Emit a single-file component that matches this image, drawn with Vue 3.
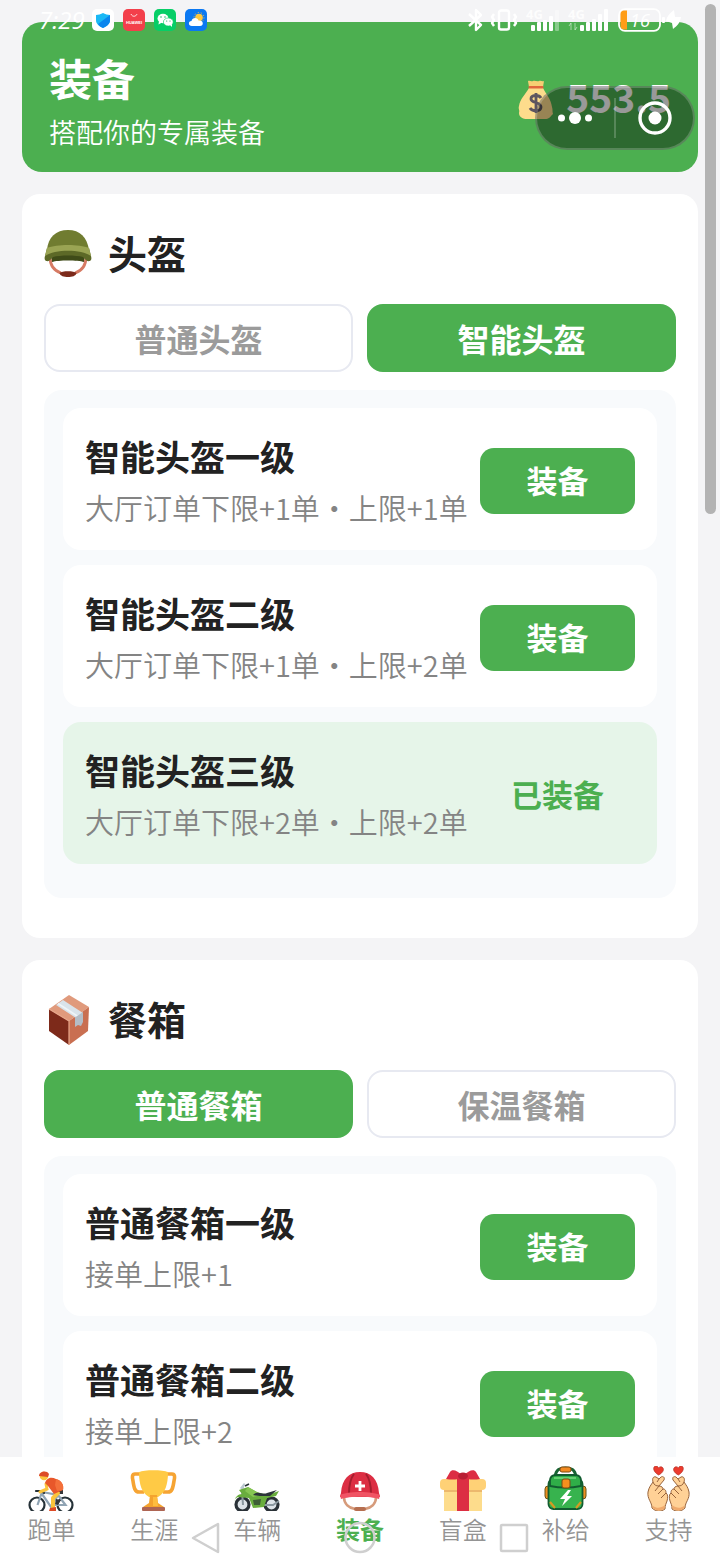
<script setup>
import { ref } from 'vue'

const sections = ref([
  {
    id: 'helmet',
    title: '头盔',
    tabs: ['普通头盔', '智能头盔'],
    active: 1,
    items: [
      { name: '智能头盔一级', desc: '大厅订单下限+1单・上限+1单', on: false },
      { name: '智能头盔二级', desc: '大厅订单下限+1单・上限+2单', on: false },
      { name: '智能头盔三级', desc: '大厅订单下限+2单・上限+2单', on: true }
    ]
  },
  {
    id: 'box',
    title: '餐箱',
    tabs: ['普通餐箱', '保温餐箱'],
    active: 0,
    items: [
      { name: '普通餐箱一级', desc: '接单上限+1', on: false },
      { name: '普通餐箱二级', desc: '接单上限+2', on: false }
    ]
  }
])

const nav = [
  { id: 'run', label: '跑单' },
  { id: 'career', label: '生涯' },
  { id: 'bike', label: '车辆' },
  { id: 'gear', label: '装备' },
  { id: 'gift', label: '盲盒' },
  { id: 'supply', label: '补给' },
  { id: 'support', label: '支持' }
]
const current = ref('gear')

function equip(section, item) {
  section.items.forEach((i) => { i.on = i === item })
}
</script>

<template>
  <div class="screen">
    <main class="page">
      <header class="hero">
        <div>
          <h1>装备</h1>
          <p>搭配你的专属装备</p>
        </div>
        <div class="money">
          <svg class="bag" viewBox="0 0 36 40" aria-hidden="true">
            <path d="M11 8 C7 15 2 19 1 26 C0 29 2 30 1 33 C1 37 5 39 9 39 H27 C31 39 32 37 35 34 C34 31 35 30 34 27 C33 19 28 14 25 8 Z" fill="#fddc8c" />
            <path d="M11 7 L10 1 C12 0 13 2 15 1 C17 0 19 2 21 1 C23 0 24 2 26 1 L25 7 Z" fill="#f6cf73" />
            <rect x="10.500" y="6" width="15" height="2.500" rx="1" fill="#e0663c" />
            <path d="M23 18 C21 14.500 13 14.500 13 19 C13 23.500 23 21.500 23 27 C23 32 14 31.500 12 28 M18 13 V33" fill="none" stroke="#5d5560" stroke-width="2.800" />
          </svg>
          <strong>553.5</strong>
        </div>
      </header>

      <section v-for="s in sections" :key="s.id" class="card">
        <h2>
          <svg v-if="s.id === 'helmet'" class="title-icon" viewBox="0 -1 48 50" aria-hidden="true">
            <path d="M6 27 C6 36 11 41 17 43 M42 27 C42 36 37 41 31 43" fill="none" stroke="#d67a63" stroke-width="2.800" />
            <path d="M15.500 43 C18 40.500 30 40.500 32.500 43 C32 46 28 47 24 47 C20 47 16 46 15.500 43 Z" fill="#7c2a1b" />
            <path d="M7 22 H41 L40 32 C34 30 14 30 8 32 Z" fill="#3f4b18" />
            <path d="M3 20 C4 7 12 0 24 0 C36 0 43 7 45 20 L40 24 H8 Z" fill="#707c30" />
            <path d="M3 18 L1 26 C0 29 1 31 3 31 C5 32 7 29 9 27 C16 25 32 25 39 27 C41 29 43 32 45 31 C47 31 48 29 47 26 L45 18 Z" fill="#5d6927" />
            <path d="M3 18 C13 14 35 14 45 18 L47 26 C37 19 11 19 1 26 Z" fill="#9aa453" />
          </svg>
          <svg v-else class="title-icon" viewBox="-1 0 48 50" aria-hidden="true">
            <path d="M24 0 L44 12 L24 26 L4 14 Z" fill="#e09a7c" />
            <path d="M4 14 L24 26 V50 L4 36 Z" fill="#7d2a1a" />
            <path d="M24 26 L44 12 L43 36 L24 50 Z" fill="#c96f51" />
            <path d="M4 14 L24 26 V50" fill="none" stroke="#e9a88c" stroke-width="1.200" />
            <path d="M11 10 L18 5 L38 18 L31 23 Z" fill="#d9e3ea" />
            <path d="M13 8.500 L33 21.500" stroke="#eff4f7" stroke-width="1.600" />
            <path d="M30 22.500 L38 17 V27 L36 31 L33 30 L30 32 Z" fill="#b4bdc6" />
          </svg>
          <span>{{ s.title }}</span>
        </h2>

        <div class="tabs" role="tablist">
          <button
            v-for="(t, i) in s.tabs"
            :key="t"
            type="button"
            role="tab"
            class="tab"
            :class="{ active: i === s.active }"
            :aria-selected="i === s.active"
            @click="s.active = i"
          >{{ t }}</button>
        </div>

        <ul class="panel">
          <li v-for="item in s.items" :key="item.name" class="item" :class="{ on: item.on }">
            <div class="info">
              <h3>{{ item.name }}</h3>
              <p>{{ item.desc }}</p>
            </div>
            <span v-if="item.on" class="state">已装备</span>
            <button v-else type="button" class="equip" @click="equip(s, item)">装备</button>
          </li>
        </ul>
      </section>
    </main>

    <nav class="navbar">
      <a
        v-for="n in nav"
        :key="n.id"
        :href="'#' + n.id"
        :class="{ current: n.id === current }"
        @click.prevent="current = n.id"
      >
        <svg class="nav-icon" viewBox="0 0 48 45" aria-hidden="true">
          <g v-if="n.id === 'run'">
            <g fill="none" stroke="#263238" stroke-width="2.200">
              <circle cx="10" cy="39" r="7.500" /><circle cx="38" cy="39" r="7.500" />
            </g>
            <path d="M10.500 39 L15 26 L31 29 L24 41 L15 28 M31 29 L38.500 39 H24" fill="none" stroke="#90a4b4" stroke-width="2.200" />
            <path d="M9 25 H15 L17 27" fill="none" stroke="#263238" stroke-width="2.200" stroke-linecap="round" />
            <path d="M29 24 L36 23.500 L36 28 L31 28 Z M29 33 L34 34 L31 39 L28 38 Z" fill="#34373b" />
            <path d="M19 18 L20 23 L13 26" fill="none" stroke="#fbc43c" stroke-width="3" stroke-linecap="round" />
            <path d="M26 23 L31 27 L26 32 V43" fill="none" stroke="#fbc43c" stroke-width="4" stroke-linejoin="round" />
            <path d="M18 17 C20 11 25 11 29 13 C35 15 37 19 36 24 L27 28 L24 24 L21 20 Z" fill="#e8572a" />
            <path d="M29 13 C35 15 37 19 36 24 L30 25 L28 19 Z" fill="#f4703a" />
            <circle cx="17" cy="10" r="4.300" fill="#fbc43c" />
            <path d="M12 10 C12 5 20 4 22 8 L21 11 Z" fill="#dd4b26" />
            <path d="M23 42 L29 41 V45 H22 Z" fill="#dd4b26" />
          </g>
          <g v-else-if="n.id === 'career'">
            <path d="M12 8 H5 C2 8 2 11 3 15 C4 22 5 26 9 26 H14 M35 8 H42 C45 8 45 11 44 15 C43 22 42 26 38 26 H33" fill="none" stroke="#f6a433" stroke-width="3.600" />
            <path d="M9 6 C14 3.500 33 3.500 38 6 C38 19 35 27 28 31 H19 C12 27 9 19 9 6 Z" fill="#ffca45" />
            <path d="M20 29 H27 L28 37 L34 41 H13 L19 37 Z" fill="#f4a32e" />
            <path d="M23 31 H27 L28 40 H23 Z" fill="#ffbd3e" />
            <rect x="12" y="41" width="23" height="4" rx="1" fill="#ae6553" />
          </g>
          <g v-else-if="n.id === 'bike'">
            <g fill="#dde3e8" stroke="#2a3137" stroke-width="3.200">
              <circle cx="9.500" cy="38.500" r="6.500" /><circle cx="38.500" cy="38.500" r="6.500" />
            </g>
            <path d="M9 25 L10 39 M22 39 H40 L46 35" fill="none" stroke="#8b98a0" stroke-width="2" />
            <path d="M7 22 L11 17 L12 18 L10 25 Z" fill="#b9c7cf" />
            <path d="M6 24 L15 21 L24 26 L34 29 L46 25 L43 30 L34 32 L31 41 L20 42 L16 32 L5 31 C2 32 1 34 1 36 C2 31 5 28 9 28 Z" fill="#69ad3d" />
            <path d="M15 21 L12 25 L20 31 L29 29 Z" fill="#86c653" />
            <path d="M20 29 C24 24 30 29 34 27 L44 24 L37 30 L27 30 Z" fill="#2c353a" />
            <path d="M20 34 L28 33 L27 39 H21 Z" fill="#3d5e35" />
            <path d="M12 20 L16 18" stroke="#29343a" stroke-width="1.600" />
          </g>
          <g v-else-if="n.id === 'gear'">
            <path d="M8 31 C8 38 13 42 19 43 H29 C35 42 40 38 40 31" fill="none" stroke="#d69b7b" stroke-width="2.600" />
            <rect x="18" y="41" width="12" height="4" rx="2" fill="#b66f50" />
            <path d="M5 27 C6 13 13 6 24 6 C35 6 42 13 43 27 L44 31 H4 Z" fill="#dc2e43" />
            <path d="M18 8 C14 13 13 20 13 28 M30 8 C34 13 35 20 35 28" fill="none" stroke="#a41e2e" stroke-width="2" />
            <path d="M4 29 C12 25 36 25 44 29 L43 33 C34 30 14 30 5 33 Z" fill="#f05464" />
            <path d="M24 15 V25 M19 20 H29" stroke="#fff" stroke-width="2.800" />
          </g>
          <g v-else-if="n.id === 'gift'">
            <rect x="5" y="20" width="38" height="25" fill="#fddc8c" />
            <rect x="1" y="13" width="46" height="11" rx="4" fill="#ffd176" />
            <path d="M5 25 H43" stroke="#e6ad63" stroke-width="1.600" />
            <rect x="18" y="10" width="12" height="35" fill="#dc2e43" />
            <path d="M24 10 C18 4 13 3 11 6 L7 13 C13 14 19 14 24 11 C29 14 35 14 41 13 L37 6 C35 3 30 4 24 10 Z" fill="#dc2e43" />
            <ellipse cx="24" cy="10" rx="5" ry="3.500" fill="#b91f34" />
          </g>
          <g v-else-if="n.id === 'supply'">
            <path d="M13 11 C14 3 18 2 23.500 2 C29 2 33 3 34 11" fill="none" stroke="#176434" stroke-width="3" />
            <rect x="18" y="1" width="11" height="5" rx="2" fill="#f38a20" stroke="#7e4a12" />
            <rect x="3" y="20" width="7" height="13" rx="3" fill="#ee8f23" stroke="#6b5417" />
            <rect x="37" y="20" width="7" height="13" rx="3" fill="#ee8f23" stroke="#6b5417" />
            <rect x="6.500" y="13" width="34" height="30" rx="5" fill="#37b34e" stroke="#125c30" stroke-width="1.800" />
            <path d="M8 20 V15 C8 11 10 9 14 9 H33 C37 9 39 11 39 15 V20 C29 22 18 22 8 20 Z" fill="#2fae48" stroke="#125c30" stroke-width="1.800" />
            <path d="M12 12 H34" stroke="#72d77c" stroke-width="1.600" />
            <rect x="20" y="13" width="8" height="9" rx="2" fill="#f5901e" stroke="#7b4a12" />
            <path d="M8 36 L13 42 M39 36 L34 42" stroke="#d69a22" stroke-width="2.200" />
            <path d="M26 24 L18 33 H23 L20 40 L30 30 H25 L29 24 Z" fill="#fff" />
          </g>
          <g v-else>
            <g v-for="side in ['left', 'right']" :key="side" :class="side">
              <path d="M13.500 9 C7 5 8 0 11 0 C13 0 13.500 2 13.500 2 C13.500 2 15 0 17 1 C20 3 18 7 13.500 9 Z" fill="#ec3b2e" stroke="#a92a20" stroke-width=".6" />
              <path d="M7 42 C7 36 2 33 3 26 C4 21 6 19 8 16 C7 13 8 10 11 11 L14 13 L16 11 C18 10 20 11 19 14 L14 20 C17 20 18 22 18 23 C21 23 21 26 21 27 C23 28 23 32 22 35 C21 38 20 39 20 43 C16 46 11 46 7 42 Z" fill="#ffd196" stroke="#98643c" stroke-width="1" />
              <path d="M8 16 C9 19 11 20 14 20 L10 25 M18 23 L13 28 M21 27 L16 32 M14 13 L12 16" fill="none" stroke="#98643c" stroke-width="1" />
              <path d="M8 40 C12 43 16 42 20 39 L19 43 C15 45 11 45 8 42 Z" fill="#f1aa6c" />
            </g>
          </g>
        </svg>
        <span>{{ n.label }}</span>
      </a>
    </nav>

    <div class="statusbar">
      <div class="status-left">
        <span class="clock">7:29</span>
        <svg viewBox="0 0 22 22" aria-hidden="true">
          <rect width="22" height="22" rx="5" fill="#fff" />
          <path d="M11 4 C13 5 16 6 18 6 V11 C18 15 15 17 11 19 C7 17 4 15 4 11 V6 C6 6 9 5 11 4 Z" fill="#1ab8f5" />
          <path d="M18 6 V11 C18 15 15 17 11 19 C9 18 7 17 6 15 Z" fill="#0b86ee" />
        </svg>
        <svg viewBox="0 0 22 22" aria-hidden="true">
          <rect width="22" height="22" rx="5" fill="#f33f4b" />
          <path d="M8 5 C9 8 13 8 14 5" fill="none" stroke="#fff" stroke-width=".8" />
          <text x="11" y="14.500" text-anchor="middle" class="brand">HUAWEI</text>
        </svg>
        <svg viewBox="0 0 22 22" aria-hidden="true">
          <rect width="22" height="22" rx="5" fill="#07ce67" />
          <ellipse cx="9" cy="9.500" rx="5.500" ry="4.700" fill="#fff" /><path d="M5 12 L4.500 15.500 L8 13.500 Z" fill="#fff" />
          <ellipse cx="14.300" cy="13" rx="4.900" ry="4" fill="#fff" stroke="#07ce67" stroke-width=".6" /><path d="M16 16 L18 18 V15 Z" fill="#fff" />
          <g fill="#07a554"><circle cx="7" cy="8" r=".7" /><circle cx="11" cy="8" r=".7" /><circle cx="12.700" cy="12" r=".6" /><circle cx="16" cy="12" r=".6" /></g>
        </svg>
        <svg viewBox="0 0 22 22" aria-hidden="true">
          <rect width="22" height="22" rx="5" fill="#0b78f2" />
          <circle cx="14" cy="8.500" r="3.800" fill="#ffc83d" /><circle cx="14" cy="8.500" r="5" fill="none" stroke="#ffc83d" stroke-dasharray="1 2.100" />
          <path d="M7 17 C3 17 3 12 6.500 12 C7 8 13 8 13.500 11.500 C19 11 19 17 15 17 Z" fill="#fff" />
        </svg>
      </div>
      <svg class="status-right" viewBox="0 -8 216 32" aria-hidden="true">
        <g fill="none" stroke="#fff" stroke-width="2.400" stroke-linejoin="round">
          <path d="M2 6 L14 17 L9 22 V2 L14 7 L2 18" />
          <rect x="32" y="2.500" width="10" height="19" rx="2" />
          <path d="M27 6 L25 9 L27 12 L25 15 L27 18 M47 6 L49 9 L47 12 L49 15 L47 18" stroke-width="2.400" />
          <rect x="152" y="1.200" width="41" height="21.600" rx="6" stroke-width="1.800" />
        </g>
        <g fill="#fff">
          <text x="59" y="11" class="net">4G</text><text x="101" y="11" class="net">4G</text>
          <rect x="64" y="17" width="4" height="6" rx="1" /><rect x="70" y="14" width="4" height="9" rx="1" /><rect x="76" y="12" width="4" height="11" rx="1" /><rect x="82" y="8" width="4" height="15" rx="1" />
          <rect x="88" y="2" width="4" height="21" rx="1" opacity=".35" />
          <path d="M102 18 L104 15 V22 M108 15 V22 L110 19" stroke="#fff" fill="none" opacity=".5" />
          <rect x="113" y="17" width="4" height="6" rx="1" /><rect x="119" y="14" width="4" height="9" rx="1" /><rect x="125" y="11" width="4" height="12" rx="1" /><rect x="131" y="6" width="4" height="17" rx="1" /><rect x="137" y="1" width="4" height="22" rx="1" />
          <rect x="195" y="9" width="3" height="6" rx="1" />
          <path d="M199 13 C200 8 203 5 207 2 L208 9 H214 C213 15 210 18 206 21 L205 15 Z" />
        </g>
        <path d="M160 2.500 H157 C155 2.500 153.500 4 153.500 6 V18 C153.500 20 155 21.500 157 21.500 H160 Z" fill="#ff9d17" />
        <text x="163" y="19" class="level">16</text>
      </svg>
    </div>

    <div class="capsule">
      <button type="button" aria-label="更多">
        <svg viewBox="0 0 36 36" aria-hidden="true"><g fill="#fff"><circle cx="3.500" cy="18" r="3.500" /><circle cx="17" cy="18" r="6" /><circle cx="30.500" cy="18" r="3.500" /></g></svg>
      </button>
      <i></i>
      <button type="button" aria-label="关闭">
        <svg viewBox="0 0 36 36" aria-hidden="true"><circle cx="18" cy="18" r="15" fill="none" stroke="#fff" stroke-width="3.400" /><circle cx="18" cy="18" r="6.500" fill="#fff" /></svg>
      </button>
    </div>

    <div class="thumb"></div>

    <div class="sysnav">
      <svg viewBox="0 0 32 34" aria-hidden="true"><path d="M28 3 V31 L3 17 Z" /></svg>
      <svg viewBox="0 0 32 34" aria-hidden="true"><circle cx="16" cy="16.500" r="14.500" /></svg>
      <svg viewBox="0 0 32 34" aria-hidden="true"><rect x="3" y="4" width="26" height="26" rx="1" /></svg>
    </div>
  </div>
</template>

<style>
html,
body {
  margin: 0;
  background: #f4f4f6;
}
</style>

<style scoped>
.screen {
  position: relative;
  height: 100vh;
  overflow: hidden;
  background: #f4f4f6;
  font-family: "Noto Sans CJK SC", sans-serif;
  color: #222;
}
h1, h2, h3, p, ul {
  margin: 0;
  padding: 0;
}
button {
  font-family: inherit;
  border: 0;
  padding: 0;
  cursor: pointer;
}
.page {
  display: flex;
  flex-direction: column;
  gap: 22px;
  padding: 22px;
}
.hero {
  display: flex;
  align-items: center;
  justify-content: space-between;
  padding: 26px 27px 20px;
  border-radius: 20px;
  background: #4caf50;
  color: #fff;
}
.hero h1 {
  font-size: 43px;
  line-height: 58px;
  font-weight: 700;
}
.hero p {
  margin-top: 6px;
  font-size: 27px;
  font-weight: 350;
  line-height: 40px;
}
.money {
  display: flex;
  align-items: flex-start;
  gap: 12px;
}
.money strong {
  font-size: 39px;
  line-height: 32px;
}
.bag {
  width: 36px;
  height: 40px;
}
.card {
  padding: 35px 22px 40px;
  border-radius: 18px;
  background: #fff;
}
.card h2 {
  display: flex;
  align-items: flex-start;
  gap: 16px;
  font-size: 39px;
  line-height: 46px;
}
.title-icon {
  width: 48px;
  height: 50px;
}
.tabs {
  display: flex;
  gap: 14px;
  margin: 25px 0 18px;
}
.tab {
  flex: 1;
  height: 68px;
  border: 2px solid #e7e9f1;
  border-radius: 16px;
  background: #fff;
  color: #9b9b9b;
  font-size: 32px;
  font-weight: 700;
}
.tab.active {
  border-color: #4caf50;
  background: #4caf50;
  color: #fff;
}
.panel {
  list-style: none;
  padding: 18px 19px 19px;
  border-radius: 18px;
  background: #f8fafc;
}
.item {
  display: flex;
  align-items: center;
  justify-content: space-between;
  margin-bottom: 15px;
  padding: 22px 22px 18px;
  border-radius: 18px;
  background: #fff;
}
.item.on {
  background: #e6f5e9;
}
.info {
  white-space: nowrap;
}
.info h3 {
  font-size: 35px;
  line-height: 52px;
}
.info p {
  font-size: 29px;
  font-weight: 350;
  line-height: 50px;
  color: #848484;
}
.equip,
.state {
  flex: none;
  width: 155px;
  height: 66px;
  border-radius: 14px;
  font-size: 31px;
  font-weight: 700;
  line-height: 64px;
  text-align: center;
}
.equip {
  padding-bottom: 2px;
  background: #4caf50;
  color: #fff;
}
.state {
  color: #4caf50;
}
.navbar {
  position: absolute;
  left: 0;
  right: 0;
  bottom: 0;
  display: flex;
  padding: 9px 0 14px;
  background: #fff;
}
.navbar a {
  flex: 1;
  display: flex;
  flex-direction: column;
  align-items: center;
  gap: 1px;
  color: #949494;
  font-size: 24px;
  font-weight: 350;
  line-height: 34px;
  text-decoration: none;
}
.navbar a.current {
  color: #4caf50;
  font-weight: 700;
}
.nav-icon {
  width: 48px;
  height: 45px;
}
.right {
  transform: translateX(47px) scaleX(-1);
}
.statusbar {
  position: absolute;
  top: 0;
  left: 39px;
  right: 37px;
  display: flex;
  align-items: flex-end;
  justify-content: space-between;
  color: #fff;
}
.status-left {
  display: flex;
  align-items: center;
  gap: 9px;
}
.status-left svg {
  width: 22px;
  height: 22px;
}
.clock {
  width: 44px;
  font: italic 400 24px/24px "Open Sans", "Noto Sans", sans-serif;
}
.brand {
  font: 700 4px "Liberation Sans", sans-serif;
  fill: #fff;
}
.status-right {
  width: 216px;
  height: 32px;
}
.net {
  font: 700 13px "Open Sans", sans-serif;
  opacity: .85;
}
.level {
  font: italic 400 18px "Open Sans", sans-serif;
  fill: #fff;
}
.capsule {
  position: absolute;
  top: 86px;
  right: 25px;
  display: flex;
  align-items: center;
  box-sizing: border-box;
  width: 160px;
  height: 64px;
  border: 2px solid rgba(255, 255, 255, .2);
  border-radius: 32px;
  background: rgba(0, 0, 0, .4);
}
.capsule button {
  flex: 1;
  display: flex;
  justify-content: center;
  background: none;
}
.capsule svg {
  width: 36px;
  height: 36px;
}
.capsule i {
  width: 2px;
  height: 40px;
  background: rgba(255, 255, 255, .2);
}
.thumb {
  position: absolute;
  top: 4px;
  right: 4px;
  width: 11px;
  height: 510px;
  border-radius: 6px;
  background: #b3b3b3;
}
.sysnav {
  position: absolute;
  left: 190px;
  right: 190px;
  bottom: 5px;
  display: flex;
  justify-content: space-between;
  pointer-events: none;
}
.sysnav svg {
  width: 32px;
  height: 34px;
  fill: none;
  stroke: #cfcfcf;
  stroke-width: 2.5px;
  stroke-linejoin: round;
}
</style>
